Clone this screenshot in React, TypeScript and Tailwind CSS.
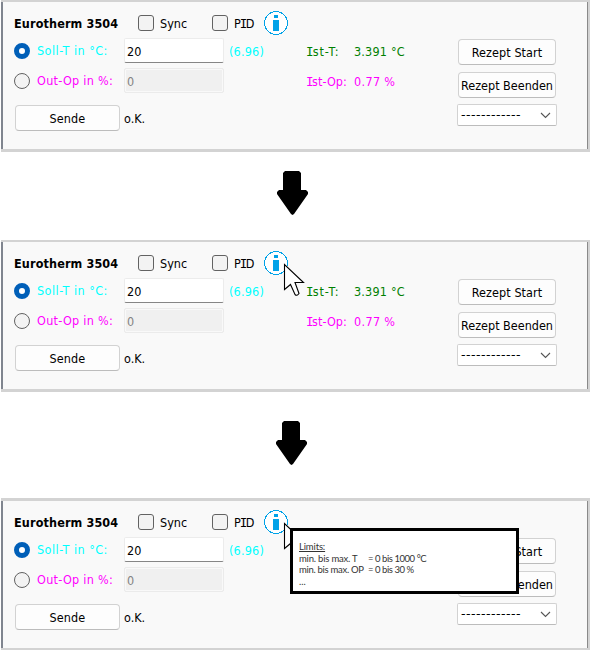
import React from 'react';

type TextProps = { className?: string; children: React.ReactNode };

function Label({ className = '', children }: TextProps) {
  return <span className={`block shrink-0 whitespace-pre leading-4 ${className}`}>{children}</span>;
}

// Capital I with slab serifs, as in the native dialog face.
function SerifI() {
  return <span className="-ml-px -mr-[1.500px] font-['DejaVu_Sans_Mono',monospace] leading-none">I</span>;
}

function CheckBox({ className = '' }: { className?: string }) {
  return <span className={`block size-4 shrink-0 rounded-[3px] border border-[#626262] bg-[#f3f3f3] ${className}`} />;
}

function InfoIcon() {
  return (
    <svg className="block shrink-0" width="24" height="24" viewBox="0 0 24 24" shapeRendering="crispEdges">
      <circle cx="12" cy="12" r="11.4" fill="#fff" stroke="#00a2e8" strokeWidth="1" />
      <path d="M10 4h4v3h-4zM9 9h6v11H9z" fill="#00a2e8" />
    </svg>
  );
}

function Cursor() {
  return (
    <svg className="absolute left-[280px] top-[21px]" width="22" height="36" viewBox="0 0 22 36">
      <path
        d="M1.5 1.5V26.500L7.500 21.500L12 31.500Q14 33.500 16 30.500L12 19.500H20.500Z"
        fill="#fff"
        stroke="#000"
        strokeWidth="1.1"
      />
    </svg>
  );
}

function Arrow({ className = '' }: { className?: string }) {
  return (
    <svg className={`block shrink-0 ${className}`} width="31" height="44" viewBox="0 0 31 44">
      <path d="M8 0H22L24 2V19H29L31 21V23L17 43L15.500 44L14 43L0 23V21L2 19H6V2Z" fill="#000" />
    </svg>
  );
}

function Button({ className = '', children }: TextProps) {
  return (
    <button
      className={`flex h-[26px] items-center justify-center whitespace-nowrap rounded-[4px] border border-[#d2d2d2] border-b-[#bcbcbc] bg-[#fdfdfd] pt-[2px] leading-[18px] ${className}`}
    >
      {children}
    </button>
  );
}

function Tooltip() {
  return (
    <div className="absolute left-[287px] top-[27px] h-[66px] w-[229px] border-[3px] border-black bg-white pl-[6px] pt-[10px] font-[Lato,sans-serif] text-[9.500px] leading-[11.500px] text-[#333]">
      <div className="tracking-[-0.15px] underline">Limits:</div>
      <div className="flex whitespace-nowrap">
        <span className="w-[69px] tracking-[-0.2px]">min. bis max. T</span>
        <span className="tracking-[-0.45px]">= 0 bis 1000 °C</span>
      </div>
      <div className="flex whitespace-nowrap">
        <span className="w-[69px] tracking-[-0.3px]">min. bis max. OP</span>
        <span className="tracking-[-0.45px]">= 0 bis 30 %</span>
      </div>
      <div>...</div>
    </div>
  );
}

function Panel({ className = '', children }: { className?: string; children?: React.ReactNode }) {
  return (
    <section className={`ml-px flex h-[152px] w-[589px] border-[#d3d3d3] ${className}`}>
      <div className="relative flex h-[147px] w-[587px] shrink-0 border-l-2 border-r border-l-[#80858f] border-r-[#8a8a8a] bg-[#f9f9f9]">
        <div className="w-[304px] shrink-0">
          <div className="flex h-9 items-center pl-[11px] pt-[6px]">
            <Label className="w-[124px] pt-[2px] font-bold tracking-[0.13px]">Eurotherm 3504</Label>
            <CheckBox />
            <Label className="w-[58px] pl-[6px] pt-[2px]">Sync</Label>
            <CheckBox />
            <Label className="w-[36px] pl-[6px] pt-[2px] tracking-[-0.1px]">P<SerifI />D</Label>
            <InfoIcon />
          </div>
          <div className="flex h-[25px] items-center pl-[11px]">
            <span className="block size-4 shrink-0 rounded-full border-[5px] border-[#005fb8] bg-white" />
            <Label className="w-[94px] pl-[7px] tracking-[0.47px] text-[#00ffff]">Soll-T in °C:</Label>
            <div className="flex h-[25px] w-[100px] items-center rounded-[2px] border border-[#ececec] border-b-[#868686] bg-white pl-[2px] pt-[3px]">20</div>
            <Label className="pl-[5px] pt-[2px] tracking-[0.2px] text-[#00ffff]">(6.96)</Label>
          </div>
          <div className="mt-[5px] flex h-[25px] items-center pl-[11px]">
            <span className="block size-4 shrink-0 rounded-full border border-[#626262] bg-[#f3f3f3]" />
            <Label className="w-[94px] pl-[7px] tracking-[0.28px] text-[#ff00ff]">Out-Op in %:</Label>
            <div className="flex h-[25px] w-[100px] items-center rounded-[2px] border border-[#ebebeb] bg-[#f0f0f0] pl-[2px] pt-[3px] text-[#838383] shadow-[inset_0_0_0_1px_#f9f9f9]">0</div>
          </div>
          <div className="mt-3 flex items-center pl-3">
            <Button className="w-[105px] tracking-[0.1px]">Sende</Button>
            <Label className="pl-[4px] pt-[2px]">o.K.</Label>
          </div>
        </div>
        <div className="w-[151px] shrink-0 pt-[42px]">
          <div className="flex text-[#008000]">
            <Label className="w-[47px] tracking-[0.8px]"><SerifI />st-T:</Label>
            <Label className="tracking-[0.2px]">3.391 °C</Label>
          </div>
          <div className="mt-[14px] flex text-[#ff00ff]">
            <Label className="w-[47px] tracking-[0.05px]"><SerifI />st-Op:</Label>
            <Label className="tracking-[0.35px]">0.77 %</Label>
          </div>
        </div>
        <div className="w-[100px] shrink-0 -ml-px pt-[37px]">
          <Button className="ml-px w-[98px] tracking-[0.08px]">Rezept Start</Button>
          <Button className="ml-px mt-[7px] w-[98px]">Rezept Beenden</Button>
          <div className="mt-[6px] flex h-[22px] items-center justify-between rounded-[2px] border border-[#d2d2d2] border-b-[#bcbcbc] bg-white pl-[3px] pr-[5px]">
            <Label className="font-['DejaVu_Sans',sans-serif] tracking-[0.5px]">------------</Label>
            <svg width="11" height="7" viewBox="0 0 11 7" fill="none" stroke="#555" strokeWidth="1.100">
              <path d="M1 1L5.500 5.500L10 1" />
            </svg>
          </div>
        </div>
        {children}
      </div>
      <div className="grow bg-[#d3d3d3]" />
    </section>
  );
}

export default function App() {
  return (
    <main className="flex h-[650px] w-[590px] flex-col overflow-hidden bg-white font-['DejaVu_Sans_Condensed','DejaVu_Sans',sans-serif] text-[12.500px] leading-[18px] text-black">
      <Panel className="border-t-2 border-b-3" />
      <Arrow className="mb-[25px] ml-[277px] mt-[19px]" />
      <Panel className="border-t-2 border-b-3">
        <Cursor />
      </Panel>
      <Arrow className="mb-[33px] ml-[276px] mt-[29px]" />
      <Panel className="border-t-3 border-b-2">
        <Cursor />
        <Tooltip />
      </Panel>
    </main>
  );
}
